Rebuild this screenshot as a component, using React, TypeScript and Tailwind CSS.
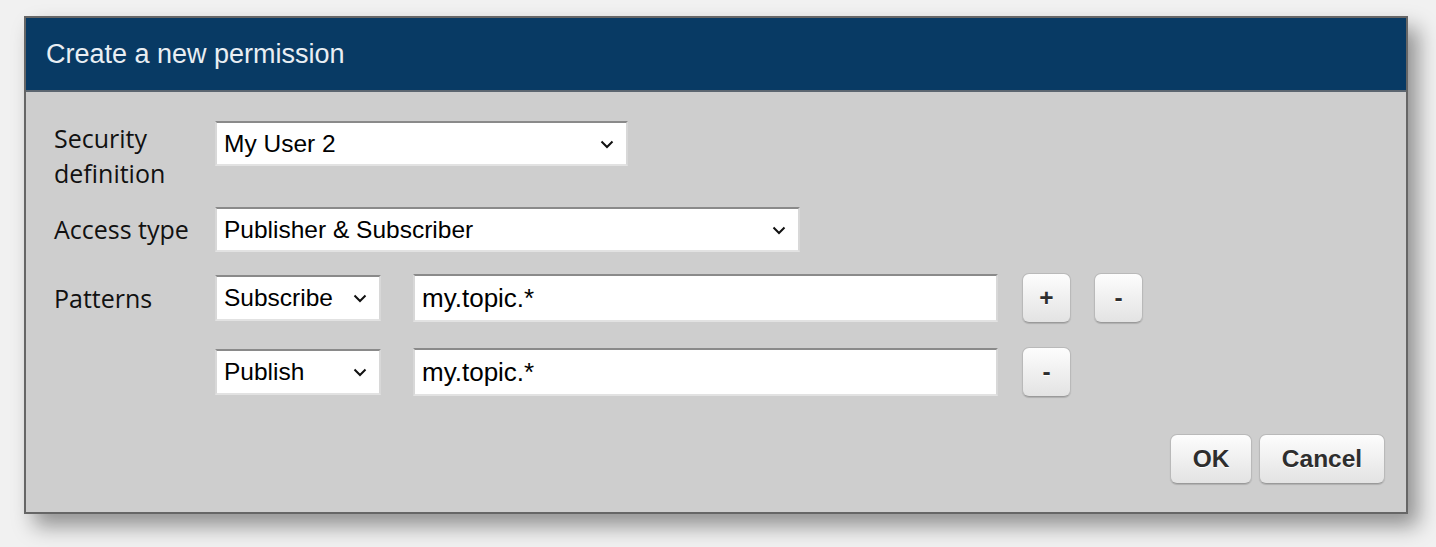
import React from "react";

const Chevron = () => (
  <svg width="14" height="9" viewBox="0 0 14 9" className="shrink-0">
    <polyline points="1.5,1.5 7,7 12.5,1.5" fill="none" stroke="#111" strokeWidth="2" />
  </svg>
);

function Select({ value, w, h }: { value: string; w: string; h: string }) {
  return (
    <div
      className={`${w} ${h} bg-white flex items-center justify-between pl-[7px] pr-[12px] pt-[1px] border-2 border-t-[#8a8a8a] border-l-[#d8d8d8] border-r-[#d8d8d8] border-b-[#e2e2e2] text-[24.5px] text-black`}
      style={{ fontFamily: '"Liberation Sans", Arial, sans-serif' }}
    >
      <span>{value}</span>
      <Chevron />
    </div>
  );
}

function TextInput({ value }: { value: string }) {
  return (
    <div
      className="w-[585px] h-[48px] bg-white flex items-center pl-[7px] pt-[1px] border-2 border-t-[#8a8a8a] border-l-[#d8d8d8] border-r-[#d8d8d8] border-b-[#e2e2e2] text-[26px] text-black"
      style={{ fontFamily: '"Liberation Sans", Arial, sans-serif' }}
    >
      {value}
    </div>
  );
}

function Btn({ label, w }: { label: string; w: string }) {
  return (
    <button
      className={`${w} h-[50px] rounded-[7px] border border-[#b9b9b9] border-b-[#9a9a9a] bg-gradient-to-b from-[#fdfdfd] to-[#e3e3e3] text-[#2e2e2e] font-bold text-[24.5px] flex items-center justify-center shadow-[0_1px_1px_rgba(0,0,0,0.15)] [text-shadow:0_1px_0_#fff]`}
      style={{ fontFamily: '"Liberation Sans", Arial, sans-serif' }}
    >
      {label}
    </button>
  );
}

export default function App() {
  const labelFont = { fontFamily: '"Open Sans", "Noto Sans", sans-serif' };
  return (
    <div className="w-[1436px] h-[547px] bg-[#f1f1f1] pt-[16px] pl-[24px]">
      <div className="w-[1384px] h-[498px] border-2 border-[#666] bg-[#cecece] shadow-[10px_12px_20px_rgba(0,0,0,0.4)] flex flex-col">
        <div
          className="h-[74px] bg-[#083a64] border-b-2 border-[#5c6670] flex items-center pl-[20px] text-[27px] text-[#e9eef3]"
          style={{ fontFamily: '"Liberation Sans", Arial, sans-serif' }}
        >
          Create a new permission
        </div>
        <div className="flex-1 flex flex-col pl-[28px] pr-[21px] pt-[29px]">
          <div className="flex items-start">
            <div className="w-[161px] text-[25px] leading-[35px] text-[#111]" style={labelFont}>
              Security
              <br />
              definition
            </div>
            <Select value="My User 2" w="w-[413px]" h="h-[45px]" />
          </div>
          <div className="flex items-center mt-[16px]">
            <div className="w-[161px] text-[25px] leading-[35px] text-[#111]" style={labelFont}>
              Access type
            </div>
            <Select value="Publisher & Subscriber" w="w-[585px]" h="h-[45px]" />
          </div>
          <div className="flex items-center mt-[21px]">
            <div className="w-[161px] text-[25px] leading-[35px] text-[#111]" style={labelFont}>
              Patterns
            </div>
            <Select value="Subscribe" w="w-[166px]" h="h-[46px]" />
            <div className="ml-[32px]">
              <TextInput value="my.topic.*" />
            </div>
            <div className="ml-[24px]">
              <Btn label="+" w="w-[49px]" />
            </div>
            <div className="ml-[23px]">
              <Btn label="-" w="w-[49px]" />
            </div>
          </div>
          <div className="flex items-center mt-[24px]">
            <div className="w-[161px]" />
            <Select value="Publish" w="w-[166px]" h="h-[46px]" />
            <div className="ml-[32px]">
              <TextInput value="my.topic.*" />
            </div>
            <div className="ml-[24px]">
              <Btn label="-" w="w-[49px]" />
            </div>
          </div>
          <div className="flex justify-end gap-[7px] mt-[37px]">
            <Btn label="OK" w="w-[82px]" />
            <Btn label="Cancel" w="w-[126px]" />
          </div>
        </div>
      </div>
    </div>
  );
}
